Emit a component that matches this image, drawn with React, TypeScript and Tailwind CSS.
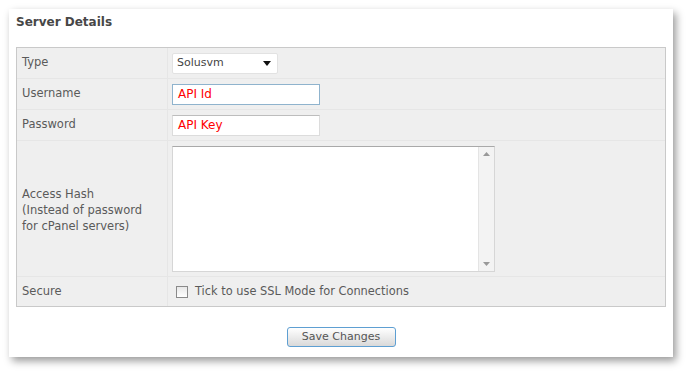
import React from "react";

const font = { fontFamily: '"DejaVu Sans", Verdana, sans-serif' };

export default function App() {
  return (
    <div className="w-[687px] h-[372px] bg-white p-[9px]" style={font}>
      <div className="w-[664px] h-[348px] bg-white shadow-[3px_4px_8px_rgba(0,0,0,0.4)] flex flex-col">
        <div className="h-[38px] pl-[7px] pt-[4px] text-[12px] font-bold text-[#474747]">Server Details</div>
        <div className="mx-[7px] border border-[#c9c9c9] bg-[#efefef] text-[11.5px] text-[#5a5a5a]">
          <div className="grid grid-cols-[151px_1fr] h-[31px] border-b border-[#e6e6e6]">
            <div className="pl-[5px] flex items-center border-r border-[#e6e6e6]">Type</div>
            <div className="flex items-center pl-[4px]">
              <div className="w-[106px] h-[21px] bg-white border border-[#e2e2e2] rounded-[2px] flex items-center justify-between pl-[4px] pr-[6px] text-[11px] text-[#444]">
                <span>Solusvm</span>
                <svg width="8" height="5" viewBox="0 0 8 5"><path d="M0 0h8L4 5z" fill="#111" /></svg>
              </div>
            </div>
          </div>
          <div className="grid grid-cols-[151px_1fr] h-[31px] border-b border-[#e6e6e6]">
            <div className="pl-[5px] flex items-center border-r border-[#e6e6e6]">Username</div>
            <div className="flex items-center pl-[4px]">
              <div className="w-[148px] h-[21px] bg-white border border-[#8fb3cd] flex items-center pl-[5px] text-[12px] text-[#f00]">API Id</div>
            </div>
          </div>
          <div className="grid grid-cols-[151px_1fr] h-[31px] border-b border-[#e6e6e6]">
            <div className="pl-[5px] flex items-center border-r border-[#e6e6e6]">Password</div>
            <div className="flex items-center pl-[4px]">
              <div className="w-[148px] h-[21px] bg-white border border-[#dcdcdc] border-t-[#bdbdbd] flex items-center pl-[5px] text-[12px] text-[#f00]">API Key</div>
            </div>
          </div>
          <div className="grid grid-cols-[151px_1fr] h-[136px] border-b border-[#e6e6e6]">
            <div className="pl-[5px] flex flex-col justify-center border-r border-[#e6e6e6] leading-[16px] pt-[2px]">
              <span>Access Hash</span>
              <span>(Instead of password</span>
              <span>for cPanel servers)</span>
            </div>
            <div className="flex items-center pl-[4px]">
              <div className="w-[323px] h-[126px] bg-white border border-[#d6d6d6] border-t-[#a9a9a9] flex">
                <div className="flex-1" />
                <div className="w-[16px] bg-[#f3f3f3] border-l border-[#e4e4e4] flex flex-col items-center justify-between py-[5px]">
                  <svg width="7" height="4" viewBox="0 0 7 4"><path d="M0 4h7L3.5 0z" fill="#999" /></svg>
                  <svg width="7" height="4" viewBox="0 0 7 4"><path d="M0 0h7L3.5 4z" fill="#999" /></svg>
                </div>
              </div>
            </div>
          </div>
          <div className="grid grid-cols-[151px_1fr] h-[29px]">
            <div className="pl-[5px] flex items-center border-r border-[#e6e6e6]">Secure</div>
            <div className="flex items-center pl-[8px] gap-[7px]">
              <div className="w-[12px] h-[12px] bg-gradient-to-b from-[#e8e8e8] to-white border border-[#8a8a8a]" />
              <span className="text-[11.4px]">Tick to use SSL Mode for Connections</span>
            </div>
          </div>
        </div>
        <div className="flex justify-center pt-[20px]">
          <div className="w-[109px] h-[20px] rounded-[3px] border border-[#5e9fd2] bg-gradient-to-b from-white to-[#d9d9d9] flex items-center justify-center text-[11px] text-[#555]">Save Changes</div>
        </div>
      </div>
    </div>
  );
}
